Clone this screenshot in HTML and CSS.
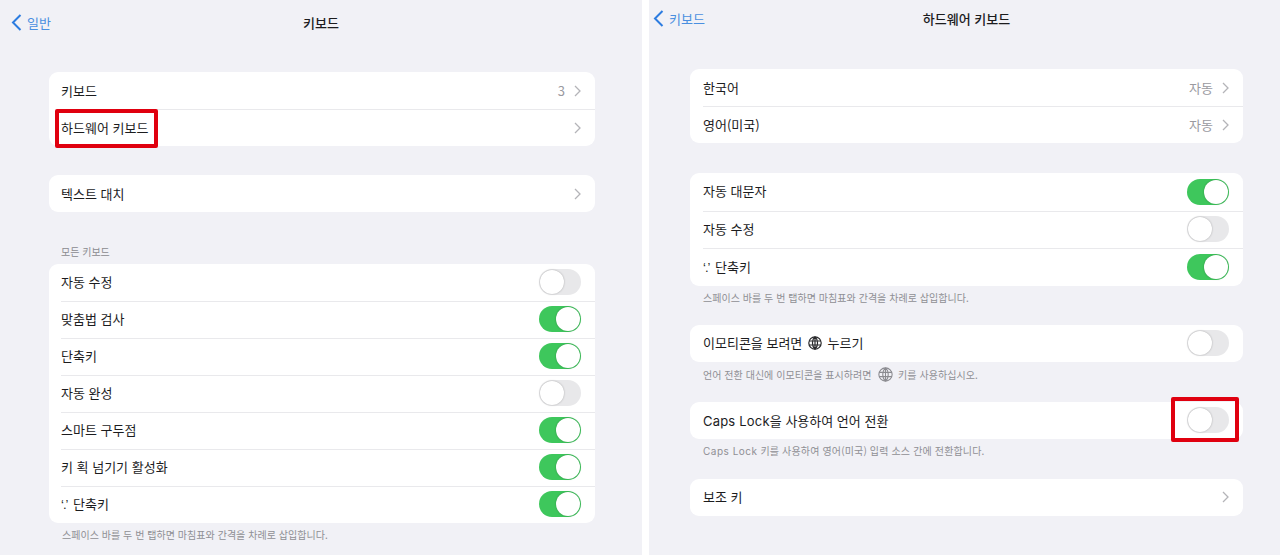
FILE: index.html
```html
<!DOCTYPE html>
<html lang="ko">
<head>
	<meta charset="utf-8">
	<title>키보드</title>
	<link rel="stylesheet" href="styles.css">
</head>
<body>
	<div class="screens">
		<section class="panel panel-left">
			<header class="nav">
				<a class="back">
					<svg class="back-icon" viewBox="0 0 11 18"><path d="M9.5 1.5 2 9l7.5 7.5"/></svg>
					일반
				</a>
				<h1 class="nav-title">키보드</h1>
			</header>

			<div class="group">
				<div class="row"><span class="label">키보드</span><span class="value">3</span><svg class="chev" viewBox="0 0 7 12"><path d="M1 1l5 5-5 5"/></svg></div>
				<div class="row"><span class="label">하드웨어 키보드</span><svg class="chev" viewBox="0 0 7 12"><path d="M1 1l5 5-5 5"/></svg></div>
				<div class="mark mark-hw"></div>
			</div>

			<div class="group group-gap">
				<div class="row"><span class="label">텍스트 대치</span><svg class="chev" viewBox="0 0 7 12"><path d="M1 1l5 5-5 5"/></svg></div>
			</div>

			<p class="section-head">모든 키보드</p>
			<div class="group group-list">
				<div class="row"><span class="label">자동 수정</span><span class="toggle"></span></div>
				<div class="row"><span class="label">맞춤법 검사</span><span class="toggle on"></span></div>
				<div class="row"><span class="label">단축키</span><span class="toggle on"></span></div>
				<div class="row"><span class="label">자동 완성</span><span class="toggle"></span></div>
				<div class="row"><span class="label">스마트 구두점</span><span class="toggle on"></span></div>
				<div class="row"><span class="label">키 획 넘기기 활성화</span><span class="toggle on"></span></div>
				<div class="row"><span class="label"><span class="quote">‘.’</span>단축키</span><span class="toggle on"></span></div>
			</div>
			<p class="note">스페이스 바를 두 번 탭하면 마침표와 간격을 차례로 삽입합니다.</p>
		</section>

		<section class="panel panel-right">
			<header class="nav nav-short">
				<a class="back">
					<svg class="back-icon" viewBox="0 0 11 18"><path d="M9.5 1.5 2 9l7.5 7.5"/></svg>
					키보드
				</a>
				<h1 class="nav-title">하드웨어 키보드</h1>
			</header>

			<div class="group">
				<div class="row"><span class="label">한국어</span><span class="value">자동</span><svg class="chev" viewBox="0 0 7 12"><path d="M1 1l5 5-5 5"/></svg></div>
				<div class="row"><span class="label">영어(미국)</span><span class="value">자동</span><svg class="chev" viewBox="0 0 7 12"><path d="M1 1l5 5-5 5"/></svg></div>
			</div>

			<div class="group group-gap group-tall text-up">
				<div class="row"><span class="label">자동 대문자</span><span class="toggle on"></span></div>
				<div class="row"><span class="label">자동 수정</span><span class="toggle"></span></div>
				<div class="row"><span class="label"><span class="quote">‘.’</span>단축키</span><span class="toggle on"></span></div>
			</div>
			<p class="note">스페이스 바를 두 번 탭하면 마침표와 간격을 차례로 삽입합니다.</p>

			<div class="group group-after-note group-close text-up">
				<div class="row">
					<span class="label">이모티콘을 보려면 <svg class="globe" viewBox="0 0 14 14"><circle cx="7" cy="7" r="6.2"/><path d="M1 5h12M1 9h12M7 .8v12.4M7 .8C3.6 3.8 3.6 10.2 7 13.2M7 .8c3.4 3 3.4 9.4 0 12.4"/></svg> 누르기</span>
					<span class="toggle"></span>
				</div>
			</div>
			<p class="note">언어 전환 대신에 이모티콘을 표시하려면 <svg class="globe globe-light" viewBox="0 0 14 14"><circle cx="7" cy="7" r="6.2"/><path d="M1 5h12M1 9h12M7 .8v12.4M7 .8C3.6 3.8 3.6 10.2 7 13.2M7 .8c3.4 3 3.4 9.4 0 12.4"/></svg> 키를 사용하십시오.</p>

			<div class="group group-after-note">
				<div class="row"><span class="label"><span class="latin">Caps Lock</span>을 사용하여 언어 전환</span><span class="toggle"></span></div>
				<div class="mark mark-caps"></div>
			</div>
			<p class="note note-wide"><span class="latin">Caps Lock</span> 키를 사용하여 영어(미국) 입력 소스 간에 전환합니다.</p>

			<div class="group group-after-note text-up">
				<div class="row"><span class="label">보조 키</span><svg class="chev" viewBox="0 0 7 12"><path d="M1 1l5 5-5 5"/></svg></div>
			</div>
		</section>
	</div>
</body>
</html>
```

FILE: styles.css
```css
*{
	margin: 0;
	box-sizing: border-box;
}

body{
	height: 555px;
	overflow: hidden;
	background: #fff;
	font-family: "Noto Sans CJK KR", "Noto Sans", sans-serif;
	color: #1c1c1e;
}

.screens{
	display: flex;
	gap: 7px;
	height: 555px;
}

.panel{
	background: #f1f1f6;
	height: 100%;
}

.panel-left{
	width: 642px;
	padding: 0 47px 0 49px;
}

.panel-right{
	width: 631px;
	padding: 0 37px 0 41px;
}

.nav{
	display: flex;
	justify-content: center;
	align-items: center;
	position: relative;
	height: 44px;
	margin-bottom: 28px;
	padding-right: 2px;
}

.nav-short{
	height: 36px;
	margin-bottom: 33px;
	padding-right: 0;
}

.nav-title{
	font-size: 13px;
	font-weight: 500;
	color: #1c1c1e;
}

.back{
	position: absolute;
	left: -38px;
	top: 50%;
	transform: translateY(-50%);
	display: flex;
	align-items: center;
	gap: 5px;
	font-size: 13px;
	color: #4a8fe0;
}

.nav-short .back{
	left: -37px;
}

.back-icon{
	width: 11px;
	height: 18px;
	fill: none;
	stroke: #2c7ce0;
	stroke-width: 2;
}

.group{
	position: relative;
	background: #fff;
	border-radius: 9px;
}

.group-gap{
	margin-top: 29px;
}

.panel-right .group-gap{
	margin-top: 30px;
}

.group-after-note{
	margin-top: 21px;
}

.group-close{
	margin-top: 20px;
}

.row{
	display: flex;
	align-items: center;
	height: 37px;
	padding: 0 14px 0 12px;
	position: relative;
	font-size: 13px;
}

.panel-right .row{
	padding-left: 13px;
}

.group-tall .row{
	height: 37.67px;
}

.group-list .row{
	padding-bottom: 2px;
}

.text-up .label{
	padding-bottom: 2px;
}

.row + .row::before{
	content: "";
	position: absolute;
	left: 12px;
	right: 0;
	top: 0;
	height: 1px;
	background: #e9e9ec;
}

.panel-right .row + .row::before{
	left: 13px;
}

.label{
	flex: 1;
}

.latin{
	font-family: Inter, sans-serif;
	letter-spacing: .2px;
}

.quote{
	display: inline-block;
	width: 8px;
	margin-right: 4px;
	font-family: "Liberation Sans", sans-serif;
	letter-spacing: -1px;
}

.value{
	color: #9a9a9f;
	margin-right: 9px;
}

.chev{
	width: 7px;
	height: 12px;
	fill: none;
	stroke: #b4b4b8;
	stroke-width: 1.3;
}

.toggle{
	position: relative;
	width: 42px;
	height: 26px;
	border-radius: 13px;
	background: #e8e8ea;
}

.toggle::after{
	content: "";
	position: absolute;
	left: 1px;
	top: 1px;
	width: 24px;
	height: 24px;
	border-radius: 50%;
	background: #fff;
	box-shadow: 0 0 2px rgba(0, 0, 0, .3);
}

.toggle.on{
	background: #3ec75c;
}

.toggle.on::after{
	left: 17px;
}

.section-head{
	margin: 33px 0 5px 12px;
	font-size: 10px;
	line-height: 14px;
	color: #8b8b90;
}

.note{
	height: 14px;
	margin: 5px 0 0 13px;
	font-size: 10px;
	line-height: 14px;
	letter-spacing: .04px;
	color: #8f8f94;
}

.note-wide{
	letter-spacing: .15px;
}

.note .latin{
	letter-spacing: .5px;
}

.globe{
	width: 14px;
	height: 14px;
	margin: 0 2px;
	vertical-align: -2px;
	fill: none;
	stroke: #2a2a2c;
	stroke-width: 1.2;
}

.globe-light{
	width: 15px;
	height: 15px;
	margin: 0 2px 0 4px;
	vertical-align: -3px;
	stroke: #8b8b90;
	stroke-width: 1;
}

.mark{
	position: absolute;
	border: 4px solid #e0000f;
	border-radius: 2px;
}

.mark-hw{
	left: 6px;
	top: 37px;
	width: 103px;
	height: 39px;
}

.mark-caps{
	left: 481px;
	top: -5px;
	width: 68px;
	height: 45px;
}
```
